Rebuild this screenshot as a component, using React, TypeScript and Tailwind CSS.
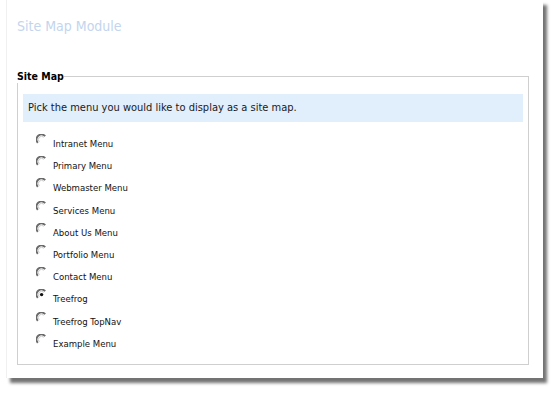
import { useState } from "react"

const MENUS = [
	"Intranet Menu",
	"Primary Menu",
	"Webmaster Menu",
	"Services Menu",
	"About Us Menu",
	"Portfolio Menu",
	"Contact Menu",
	"Treefrog",
	"Treefrog TopNav",
	"Example Menu",
]

function Radio({ checked }: { checked: boolean }) {
	// old-style inset radio: shaded arc on top-left
	return (
		<svg width="11" height="11" viewBox="0 0 11 11" className="shrink-0">
			<path d="M1.8 8.8 A4.3 4.3 0 0 1 9.2 2.2" fill="none" stroke="#6a6a6a" strokeWidth="2" />
			<path d="M3.3 7.8 A3 3 0 0 1 7.8 3.3" fill="none" stroke="#bdbdbd" strokeWidth="0.8" />
			{checked && <circle cx="5.6" cy="5.6" r="1.7" fill="#111" />}
		</svg>
	)
}

export default function App() {
	const [selected, setSelected] = useState("Treefrog")

	return (
		<div className="w-[556px] h-[393px] bg-white font-['DejaVu_Sans_Condensed','DejaVu_Sans',Verdana,sans-serif] font-stretch-condensed">
			<div className="ml-[6px] w-[537px] h-[378px] bg-white border-l border-[#f0f0f0] shadow-[4px_5px_3px_rgba(0,0,0,0.55)] pl-[10px] pr-[14px] pt-[17px]">
				{/* Header */}
				<h1 className="text-[14px] leading-[18px] text-[#c3d5ee]">Site Map Module</h1>

				{/* Fieldset */}
				<fieldset className="mt-[35px] border border-[#cfcfcf] h-[295px] px-[5px] pt-[11px]">
					<legend className="-ml-[6px] text-[10.5px] leading-[13px] font-bold text-black">Site Map</legend>

					<div className="bg-[#e1eefc] h-[28px] flex items-center pl-[5px] text-[11px] text-[#1a1a1a]">
						Pick the menu you would like to display as a site map.
					</div>

					<div className="mt-[8px] pl-[13px] flex flex-col">
						{MENUS.map((menu) => (
							<label
								key={menu}
								className="h-[22.2px] flex items-start gap-[6px] cursor-pointer"
								onClick={() => setSelected(menu)}
							>
								<span className="mt-[4px]">
									<Radio checked={selected === menu} />
								</span>
								<span className="mt-[8px] text-[9.5px] leading-[12px] text-[#111]">{menu}</span>
							</label>
						))}
					</div>
				</fieldset>
			</div>
		</div>
	)
}
